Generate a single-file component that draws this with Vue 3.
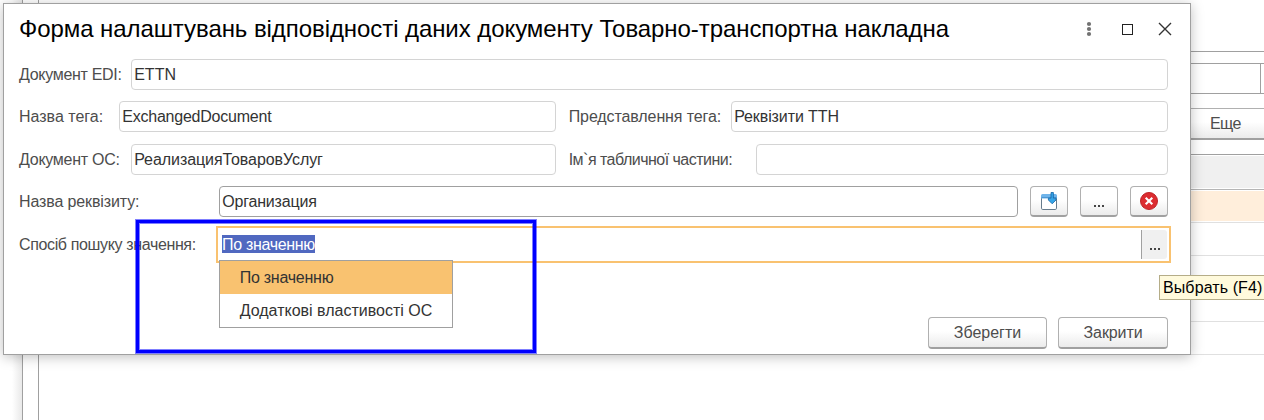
<script setup>
import { ref } from 'vue'

const title = 'Форма налаштувань відповідності даних документу Товарно-транспортна накладна'
const options = ['По значенню', 'Додаткові властивості ОС']
const selected = ref(0)
</script>

<template>
  <div class="screen">
    <div class="backdrop">
      <div class="side"></div>
      <div class="gutter"></div>
      <div class="list-page">
        <div class="page-head"></div>
        <div class="search"><span class="search-main"></span><span class="search-end"></span></div>
        <div class="more"><span>Еще</span></div>
        <div class="table">
          <div class="table-head"></div>
          <div class="table-row current"></div>
          <div v-for="n in 4" :key="n" class="table-row"></div>
        </div>
      </div>
    </div>

    <section class="dialog">
      <header class="titlebar">
        <h1>{{ title }}</h1>
        <svg class="window-icons" width="90" height="20" viewBox="0 0 90 20">
          <g fill="#727272">
            <circle cx="6" cy="5" r="2.1" />
            <circle cx="6" cy="10" r="2.1" />
            <circle cx="6" cy="15" r="2.1" />
          </g>
          <rect x="39.5" y="5.5" width="10" height="10" fill="none" stroke="#222" />
          <path d="M76 4 L88 16 M88 4 L76 16" fill="none" stroke="#333" stroke-width="1.4" />
        </svg>
      </header>

      <div class="row first">
        <label class="w-doc edi">Документ EDI:</label>
        <div class="field grow">ETTN</div>
      </div>
      <div class="row second">
        <div class="half">
          <label class="w-tag tag">Назва тега:</label>
          <div class="field grow exch">ExchangedDocument</div>
        </div>
        <div class="half right">
          <label class="w-view">Представлення тега:</label>
          <div class="field grow view">Реквізити ТТН</div>
        </div>
      </div>
      <div class="row third">
        <div class="half">
          <label class="w-doc os">Документ ОС:</label>
          <div class="field grow real">РеализацияТоваровУслуг</div>
        </div>
        <div class="half right">
          <label class="w-part part">Ім`я табличної частини:</label>
          <div class="field grow"></div>
        </div>
      </div>
      <div class="row fourth">
        <label class="w-prop prop">Назва реквізиту:</label>
        <div class="field editable grow org">Организация</div>
        <div class="tools">
          <button class="btn">
            <svg class="insert-icon" width="18" height="20" viewBox="0 0 18 20">
              <rect x="1.5" y="4.5" width="15" height="14" rx="1.3" fill="#fff" stroke="#667b8c" />
              <path d="M1 7.5V4.5Q1 3 2.5 3H15.5Q17 3 17 4.5V7.5Z" fill="#6fb4ea" />
              <path d="M1.5 6.5H16.5" stroke="#4b97d4" />
              <path d="M11 1.5H13.4V7.2H16V9L12.2 12.8L8.4 9V7.2H11Z" fill="#35a5e8" stroke="#1464a6" stroke-width=".8" />
            </svg>
          </button>
          <button class="btn"><i class="dots"></i></button>
          <button class="btn">
            <svg width="18" height="18" viewBox="0 0 18 18">
              <circle cx="9" cy="9" r="8.5" fill="#dc2c30" stroke="#bd2428" />
              <path d="M5.7 5.7L12.3 12.3M12.3 5.7L5.7 12.3" stroke="#fff" stroke-width="2.1" />
            </svg>
          </button>
        </div>
      </div>
      <div class="row fifth">
        <label class="w-mode mode">Спосіб пошуку значення:</label>
        <div class="combo">
          <span class="selection">По значенню</span>
          <button class="pick"><i class="dots"></i></button>
          <ul class="menu">
            <li v-for="(o, i) in options" :key="o" :class="{ active: i === selected }" @click="selected = i">{{ o }}</li>
          </ul>
        </div>
      </div>

      <footer class="actions">
        <button class="btn save">Зберегти</button>
        <button class="btn close">Закрити</button>
      </footer>
    </section>

    <div class="highlight"></div>
    <div class="tooltip">Выбрать (F4)</div>
  </div>
</template>

<style>
body { margin: 0; overflow: hidden; }
</style>

<style scoped>
* { box-sizing: border-box; }
.screen {
  position: relative;
  width: 1264px;
  height: 420px;
  overflow: hidden;
  background: #fff;
  color: #333;
  font: 16px/18px "Liberation Sans", Arial, sans-serif;
  white-space: nowrap;
}
.backdrop { display: flex; height: 100%; }
.side { width: 23px; border-right: 1px solid #a0a0a0; background: linear-gradient(90deg, #fff 12px, #e9e9e9 22px); }
.gutter { width: 16px; border-right: 1px solid #a0a0a0; }
.list-page { flex: 1; display: flex; flex-direction: column; }
.page-head { height: 52px; border-bottom: 1px solid #a0a0a0; }
.search { display: flex; height: 31px; margin-top: 11px; border: 1px solid #a0a0a0; border-width: 1px 0; }
.search-main { flex: 1; border-right: 1px solid #a0a0a0; }
.search-end { width: 3px; }
.more {
  height: 32px;
  margin-top: 14px;
  padding: 6px 23px 0 0;
  border-top: 1px solid #b0b0b0;
  border-bottom: 2px solid #a0a0a0;
  background: linear-gradient(#fff 45%, #ebebeb);
  color: #4d4d4d;
  text-align: right;
  letter-spacing: -0.5px;
}
.table { margin-top: 14px; border-top: 1px solid #a0a0a0; }
.table-head { height: 35px; border-bottom: 1px solid #b5b5b5; background: #f0f0f0; background-clip: content-box; padding: 1px 0; }
.table-row { height: 33px; border-bottom: 1px solid #e0e0e0; }
.table-row.current { padding: 1px 0; background: #ffeedb; background-clip: content-box; }

.dialog {
  position: absolute;
  left: 3px;
  top: 3px;
  width: 1188px;
  height: 352px;
  padding: 0 22px 0 15px;
  border: 1px solid #a0a0a0;
  background: #fff;
  box-shadow: 0 2px 12px rgba(0, 0, 0, 0.25);
}
.titlebar { display: flex; justify-content: space-between; height: 55px; padding-top: 11px; }
h1 { margin: 0; color: #000; font-size: 24px; font-weight: 400; line-height: 28px; letter-spacing: -0.072px; }
.window-icons { margin: 4px -5px 0 0; }
.row { display: flex; height: 31px; line-height: 31px; }
.second { margin-top: 11px; }
.third { margin-top: 12px; }
.fourth { margin-top: 11px; }
.fifth { height: 37px; margin: 9px -3px 0 0; line-height: 37px; }
.half { display: flex; width: 537px; }
.half.right { flex: 1; width: auto; padding-left: 12px; }
.half.right label { padding-left: 0.7px; }
label { flex: none; color: #4d4d4d; }
.w-doc { width: 112px; }
.w-tag { width: 100px; }
.w-view { width: 163px; }
.w-part { width: 188px; }
.w-prop { width: 200px; }
.w-mode { width: 197px; }
.edi { letter-spacing: -0.3px; }
.tag { letter-spacing: 0; }
.exch { letter-spacing: -0.22px; }
.view, .w-view { letter-spacing: -0.1px; }
.prop { letter-spacing: -0.12px; }
.os { letter-spacing: -0.26px; }
.real { letter-spacing: -0.07px; }
.part { letter-spacing: -0.52px; }
.org { letter-spacing: -0.18px; }
.mode { letter-spacing: -0.36px; }
.field { height: 31px; padding-left: 2.2px; border: 1px solid #d4d4d4; border-radius: 4px; line-height: 29px; }
.field.editable { border-color: #a0a0a0; }
.grow { flex: 1; }
.tools { display: flex; gap: 12px; margin-left: 12px; }
.btn {
  display: flex;
  align-items: center;
  justify-content: center;
  width: 38px;
  height: 31px;
  padding: 0;
  border: 1px solid #b0b0b0;
  border-bottom: 2px solid #a0a0a0;
  border-radius: 4px;
  background: linear-gradient(#fff 45%, #ebebeb);
  color: #4d4d4d;
  font: inherit;
}
.insert-icon { margin-top: -1px; }
.dots { width: 2px; height: 2px; margin-top: 9px; background: #444; box-shadow: -4px 0 #444, 4px 0 #444; }
.combo { position: relative; display: flex; flex: 1; align-items: center; justify-content: space-between; padding: 0 2px 0 4px; border: 2px solid #f9c270; }
.selection { height: 18px; margin-bottom: 1px; background: #5068c0; color: #fff; line-height: 19px; letter-spacing: -0.31px; }
.pick { display: flex; align-items: center; justify-content: center; width: 26px; height: 29px; padding: 0; border: 0; border-left: 1px solid #a0a0a0; border-radius: 0 3px 3px 0; background: #f0f0f0; }
.menu { position: absolute; left: 1px; top: 32px; width: 234px; margin: 0; padding: 0; border: 1px solid #a0a0a0; background: #fff; list-style: none; }
.menu li { height: 33px; padding-left: 19.7px; line-height: 33px; }
.menu li.active { background: #f9c270; letter-spacing: -0.25px; }
.actions { display: flex; justify-content: flex-end; gap: 11px; margin-top: 54px; }
.actions .btn { height: 32px; }
.actions .save { width: 119px; letter-spacing: 0; }
.actions .close { width: 110px; letter-spacing: -0.1px; }
.highlight {
  position: absolute;
  left: 136px;
  top: 220px;
  width: 400px;
  height: 133px;
  border: 3px solid #00f;
  box-shadow: 0 0 0 1px rgba(0, 0, 255, 0.5), inset 0 0 0 1px rgba(0, 0, 255, 0.5);
}
.tooltip {
  position: absolute;
  left: 1159px;
  top: 275px;
  width: 110px;
  height: 25px;
  padding-left: 3px;
  border: 1px solid #b5ad88;
  background: #fffadc;
  color: #000;
  line-height: 23px;
  letter-spacing: 0.1px;
}
</style>
